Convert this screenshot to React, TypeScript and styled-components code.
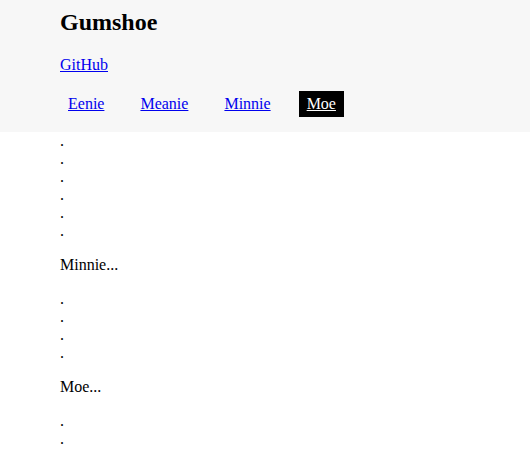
import styled, { createGlobalStyle } from "styled-components";

const GlobalStyle = createGlobalStyle`
  html, body {
    margin: 0;
    padding: 0;
    background: #ffffff;
  }
  body {
    font-family: "Liberation Serif", "Times New Roman", serif;
    font-size: 16px;
    color: #000000;
  }
`;

const Header = styled.header`
  background-color: #f7f7f7;
  padding: 9px 60px 15px;
`;
const Title = styled.h1`
  font-size: 24px;
  font-weight: 700;
  margin: 0 0 20px;
`;
const RepoLink = styled.p`
  margin: 0 0 17px;
  a {
    color: #0000ee;
  }
`;
const Nav = styled.nav`
  display: flex;
  gap: 20px;
`;
const NavLink = styled.a<{ $active?: boolean }>`
  display: block;
  padding: 4px 8px;
  color: ${(props) => (props.$active ? "#ffffff" : "#0000ee")};
  background-color: ${(props) => (props.$active ? "#000000" : "transparent")};
  text-decoration: underline;
`;

const Content = styled.main`
  padding: 0 60px;
`;
const Filler = styled.div`
  line-height: normal;
`;
const Section = styled.p`
  margin: 16px 0;
`;

const links = ["Eenie", "Meanie", "Minnie", "Moe"];

function Dots({ count }: { count: number }) {
  return (
    <Filler>
      {Array.from({ length: count }).map((_, i) => (
        <div key={i}>.</div>
      ))}
    </Filler>
  );
}

function App() {
  const active = "Moe";
  return (
    <>
      <GlobalStyle />
      <Header>
        <Title>Gumshoe</Title>
        <RepoLink>
          <a href="#">GitHub</a>
        </RepoLink>
        <Nav>
          {links.map((name) => (
            <NavLink key={name} href={`#${name.toLowerCase()}`} $active={name === active}>
              {name}
            </NavLink>
          ))}
        </Nav>
      </Header>
      <Content>
        <Dots count={6} />
        <Section id="minnie">Minnie...</Section>
        <Dots count={4} />
        <Section id="moe">Moe...</Section>
        <Dots count={2} />
      </Content>
    </>
  );
}

export default App;
